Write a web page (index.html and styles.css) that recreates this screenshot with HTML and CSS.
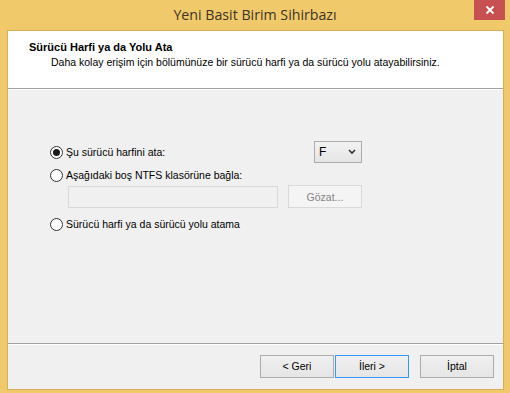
FILE: index.html
```html
<!doctype html>
<html lang="tr">
  <head>
    <meta charset="UTF-8" />
    <title>Yeni Basit Birim Sihirbazı</title>
    <link rel="stylesheet" href="styles.css">
  </head>
  <body>
    <div class="window">
      <div class="titlebar">
        <span class="title">Yeni Basit Birim Sihirbazı</span>
        <span class="close">
          <svg viewBox="0 0 10 10" width="10" height="10">
            <path d="M1.5 1.5l7 7M8.5 1.5l-7 7" stroke="#fff" stroke-width="1.8" />
          </svg>
        </span>
      </div>

      <div class="client">
        <div class="header">
          <h1>Sürücü Harfi ya da Yolu Ata</h1>
          <p>Daha kolay erişim için bölümünüze bir sürücü harfi ya da sürücü yolu atayabilirsiniz.</p>
        </div>
        <div class="sep"></div>

        <div class="content">
          <div class="row">
            <label class="radio checked"><span class="dot"></span>Şu sürücü harfini ata:</label>
            <div class="select">F<span class="chev">
              <svg viewBox="0 0 8 6" width="8" height="6">
                <path d="M1 1l3 3 3-3" fill="none" stroke="#333" stroke-width="1.6" />
              </svg>
            </span></div>
          </div>
          <div class="row">
            <label class="radio"><span class="dot"></span>Aşağıdaki boş NTFS klasörüne bağla:</label>
          </div>
          <div class="row path-row">
            <div class="textbox"></div>
            <button class="btn disabled">Gözat...</button>
          </div>
          <div class="row">
            <label class="radio"><span class="dot"></span>Sürücü harfi ya da sürücü yolu atama</label>
          </div>
        </div>

        <div class="sep"></div>
        <div class="footer">
          <button class="btn">&lt; Geri</button>
          <button class="btn default">İleri &gt;</button>
          <button class="btn cancel">İptal</button>
        </div>
      </div>
    </div>
  </body>
</html>
```

FILE: styles.css
```css
* {
  margin: 0;
  padding: 0;
  box-sizing: border-box;
}

body {
  width: 510px;
  height: 393px;
  overflow: hidden;
  background: #f0c96b;
  font-family: "Liberation Sans", Arial, sans-serif;
  font-size: 10.5px;
  color: #000;
}

.window {
  display: flex;
  flex-direction: column;
  height: 393px;
}

.titlebar {
  position: relative;
  height: 30px;
  display: flex;
  align-items: center;
  justify-content: center;
}

.title {
  font-family: "Open Sans", "Noto Sans", sans-serif;
  font-size: 14.2px;
  color: #3c3427;
  margin-top: -1px;
}

.close {
  position: absolute;
  top: 0;
  right: 5px;
  width: 31px;
  height: 20px;
  background: #c75050;
  display: flex;
  align-items: center;
  justify-content: center;
}

.client {
  margin: 0 6px 3px 7px;
  border: 1px solid #d6ae57;
  background: #f0f0f0;
  flex: 1;
  display: flex;
  flex-direction: column;
}

.header {
  background: #fff;
  height: 57px;
  padding: 10px 0 0 21px;
}

.header h1 {
  font-size: 11px;
  font-weight: bold;
  line-height: 13px;
}

.header p {
  margin: 2px 0 0 22px;
  line-height: 13px;
}

.sep {
  height: 2px;
  border-top: 1px solid #a0a0a0;
  border-bottom: 1px solid #fff;
}

.content {
  flex: 1;
  padding: 51px 0 0 42px;
}

.row {
  display: flex;
  align-items: center;
}

.row:nth-child(1) {
  height: 22px;
}

.row:nth-child(2) {
  height: 20px;
  margin-top: 2px;
}

.path-row {
  padding-left: 18px;
  height: 23px;
}

.row:nth-child(4) {
  height: 20px;
  margin-top: 6px;
}

.radio {
  display: flex;
  align-items: center;
  width: 264px;
}

.dot {
  width: 13px;
  height: 13px;
  border: 1px solid #333;
  border-radius: 50%;
  background: #fff;
  margin-right: 3px;
  display: flex;
  align-items: center;
  justify-content: center;
}

.checked .dot::after {
  content: "";
  width: 7px;
  height: 7px;
  border-radius: 50%;
  background: #1a1a1a;
}

.select {
  width: 48px;
  height: 22px;
  border: 1px solid #acacac;
  background: linear-gradient(#f2f2f2, #e5e5e5);
  display: flex;
  align-items: center;
  padding-left: 4px;
  font-size: 12px;
}

.chev {
  margin-left: auto;
  margin-right: 5px;
  display: flex;
}

.textbox {
  width: 210px;
  height: 22px;
  border: 1px solid #d9d9d9;
  background: #f0f0f0;
  margin-right: 10px;
}

.btn {
  font-family: "Liberation Sans", Arial, sans-serif;
  font-size: 10.5px;
  width: 74px;
  height: 23px;
  border: 1px solid #acacac;
  background: linear-gradient(#f0f0f0, #e5e5e5);
  color: #000;
}

.btn.disabled {
  border-color: #d9d9d9;
  background: #f4f4f4;
  color: #838383;
}

.footer {
  height: 44px;
  display: flex;
  align-items: center;
  padding-left: 252px;
  padding-bottom: 2px;
}

.btn.default {
  border-color: #3399ff;
  margin-left: 1px;
}

.btn.cancel {
  margin-left: 11px;
}
```
